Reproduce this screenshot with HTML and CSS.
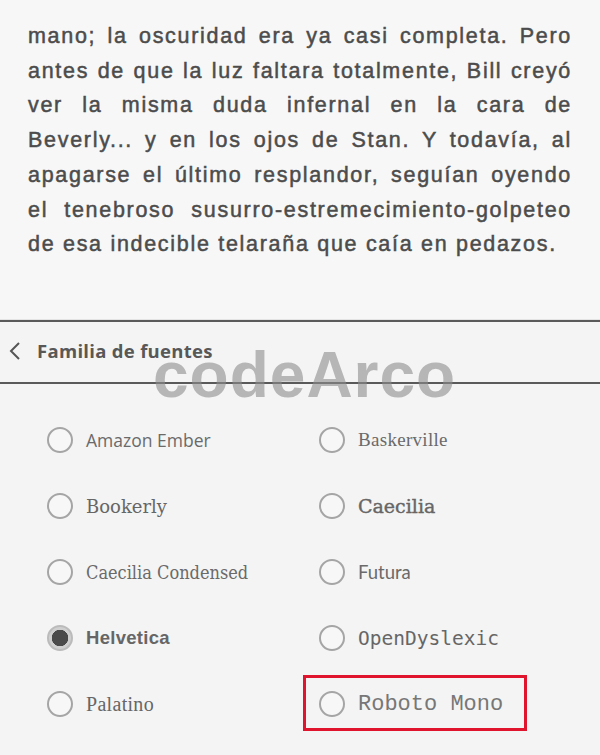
FILE: index.html
```html
<!DOCTYPE html>
<html lang="es">
<head>
<meta charset="utf-8">
<title>Familia de fuentes</title>
<link rel="stylesheet" href="styles.css">
</head>
<body>
<div class="page">
  <section class="reading">
    <p>
      <span class="ln">mano; la oscuridad era ya casi completa. Pero</span>
      <span class="ln">antes de que la luz faltara totalmente, Bill creyó</span>
      <span class="ln">ver la misma duda infernal en la cara de</span>
      <span class="ln">Beverly... y en los ojos de Stan. Y todavía, al</span>
      <span class="ln">apagarse el último resplandor, seguían oyendo</span>
      <span class="ln">el tenebroso susurro-estremecimiento-golpeteo</span>
      <span class="ln last">de esa indecible telaraña que caía en pedazos.</span>
    </p>
  </section>
  <section class="panel">
    <header class="panel-head">
      <svg class="back" width="14" height="20" viewBox="0 0 14 20"><polyline points="11,2 3,10 11,18" fill="none" stroke="#555" stroke-width="2"/></svg>
      <span class="title">Familia de fuentes</span>
      <span class="watermark">codeArco</span>
    </header>
    <div class="options">
      <label class="opt"><span class="radio"></span><span class="f-ember">Amazon Ember</span></label>
      <label class="opt"><span class="radio"></span><span class="f-basker">Baskerville</span></label>
      <label class="opt"><span class="radio"></span><span class="f-bookerly">Bookerly</span></label>
      <label class="opt"><span class="radio"></span><span class="f-caecilia">Caecilia</span></label>
      <label class="opt"><span class="radio"></span><span class="f-caec-cond">Caecilia Condensed</span></label>
      <label class="opt"><span class="radio"></span><span class="f-futura">Futura</span></label>
      <label class="opt"><span class="radio checked"></span><span class="f-helv">Helvetica</span></label>
      <label class="opt"><span class="radio"></span><span class="f-dys">OpenDyslexic</span></label>
      <label class="opt"><span class="radio"></span><span class="f-palatino">Palatino</span></label>
      <label class="opt highlight"><span class="radio"></span><span class="f-mono">Roboto Mono</span></label>
    </div>
  </section>
</div>
</body>
</html>
```

FILE: styles.css
```css
html, body {
  margin: 0;
  padding: 0;
}
body {
  background: #f4f4f4;
}
.page {
  width: 600px;
  height: 755px;
  overflow: hidden;
  background: #f4f4f4;
}
.reading {
  height: 300px;
  padding: 19px 28px 0 28px;
  background: #f7f7f7;
  border-bottom: 1px solid #e4e4e4;
}
.reading p {
  margin: 0;
  font-family: "Liberation Sans", Arial, sans-serif;
  font-size: 21.5px;
  letter-spacing: 1.7px;
  -webkit-text-stroke: 0.5px #4c4c4c;
  line-height: 34.7px;
  color: #4c4c4c;
}
.ln {
  display: block;
  white-space: nowrap;
  text-align: justify;
  text-align-last: justify;
}
.ln.last {
  text-align: left;
  text-align-last: left;
}
.panel {
  border-top: 2px solid #5a5a5a;
}
.panel-head {
  position: relative;
  height: 60px;
  display: flex;
  align-items: center;
  padding-left: 8px;
  gap: 15px;
  border-bottom: 2px solid #5a5a5a;
}
.back {
  margin-top: -2px;
}
.title {
  font-family: "Open Sans", "Noto Sans", sans-serif;
  font-weight: 700;
  font-size: 18.5px;
  letter-spacing: 0.3px;
  color: #585858;
  margin-top: -3px;
}
.watermark {
  position: absolute;
  left: 153px;
  top: 21px;
  font-family: "Liberation Sans", Arial, sans-serif;
  font-weight: bold;
  font-size: 64px;
  line-height: 64px;
  letter-spacing: 1px;
  color: rgba(140, 140, 140, 0.6);
}
.options {
  display: grid;
  grid-template-columns: 272px 1fr;
  grid-auto-rows: 66px;
  padding: 23px 0 0 47px;
}
.opt {
  display: flex;
  align-items: center;
  gap: 13px;
  color: #666;
  position: relative;
}
.radio {
  flex: none;
  box-sizing: border-box;
  width: 26px;
  height: 26px;
  border-radius: 50%;
  border: 2px solid #a5a5a5;
  background: #f7f7f7;
}
.radio.checked {
  border-color: #bbb;
  background: radial-gradient(circle, #4a4a4a 0 8px, #cfcfcf 8.5px 100%);
}
.highlight::after {
  content: "";
  position: absolute;
  left: -16px;
  top: 4px;
  width: 218px;
  height: 50px;
  border: 3px solid #e0142c;
}
.f-ember {
  font-family: "Open Sans", sans-serif;
  font-size: 17.5px;
  color: #6a6a6a;
}
.f-bookerly {
  font-family: "DejaVu Serif", serif;
  font-size: 18px;
  color: #666;
}
.f-caec-cond {
  font-family: "DejaVu Serif", serif;
  font-stretch: condensed;
  font-size: 18px;
  color: #6a6a6a;
}
.f-helv {
  font-family: "Liberation Sans", Arial, sans-serif;
  font-weight: bold;
  font-size: 18.5px;
  letter-spacing: 0.3px;
  color: #666;
}
.f-palatino {
  font-family: "Liberation Serif", serif;
  font-size: 20px;
  letter-spacing: 0.3px;
  color: #666;
}
.f-basker {
  font-family: "Liberation Serif", serif;
  font-size: 19px;
  letter-spacing: 0.3px;
  color: #6a6a6a;
}
.f-caecilia {
  font-family: "DejaVu Serif", serif;
  font-size: 19px;
  color: #666;
  -webkit-text-stroke: 0.4px #666;
}
.f-futura {
  font-family: "Lato", sans-serif;
  font-size: 18.5px;
  color: #6a6a6a;
}
.f-dys {
  font-family: "DejaVu Sans Mono", monospace;
  font-size: 19.5px;
  color: #666;
}
.f-mono {
  font-family: "Liberation Mono", monospace;
  font-size: 22px;
  color: #777;
}
```
